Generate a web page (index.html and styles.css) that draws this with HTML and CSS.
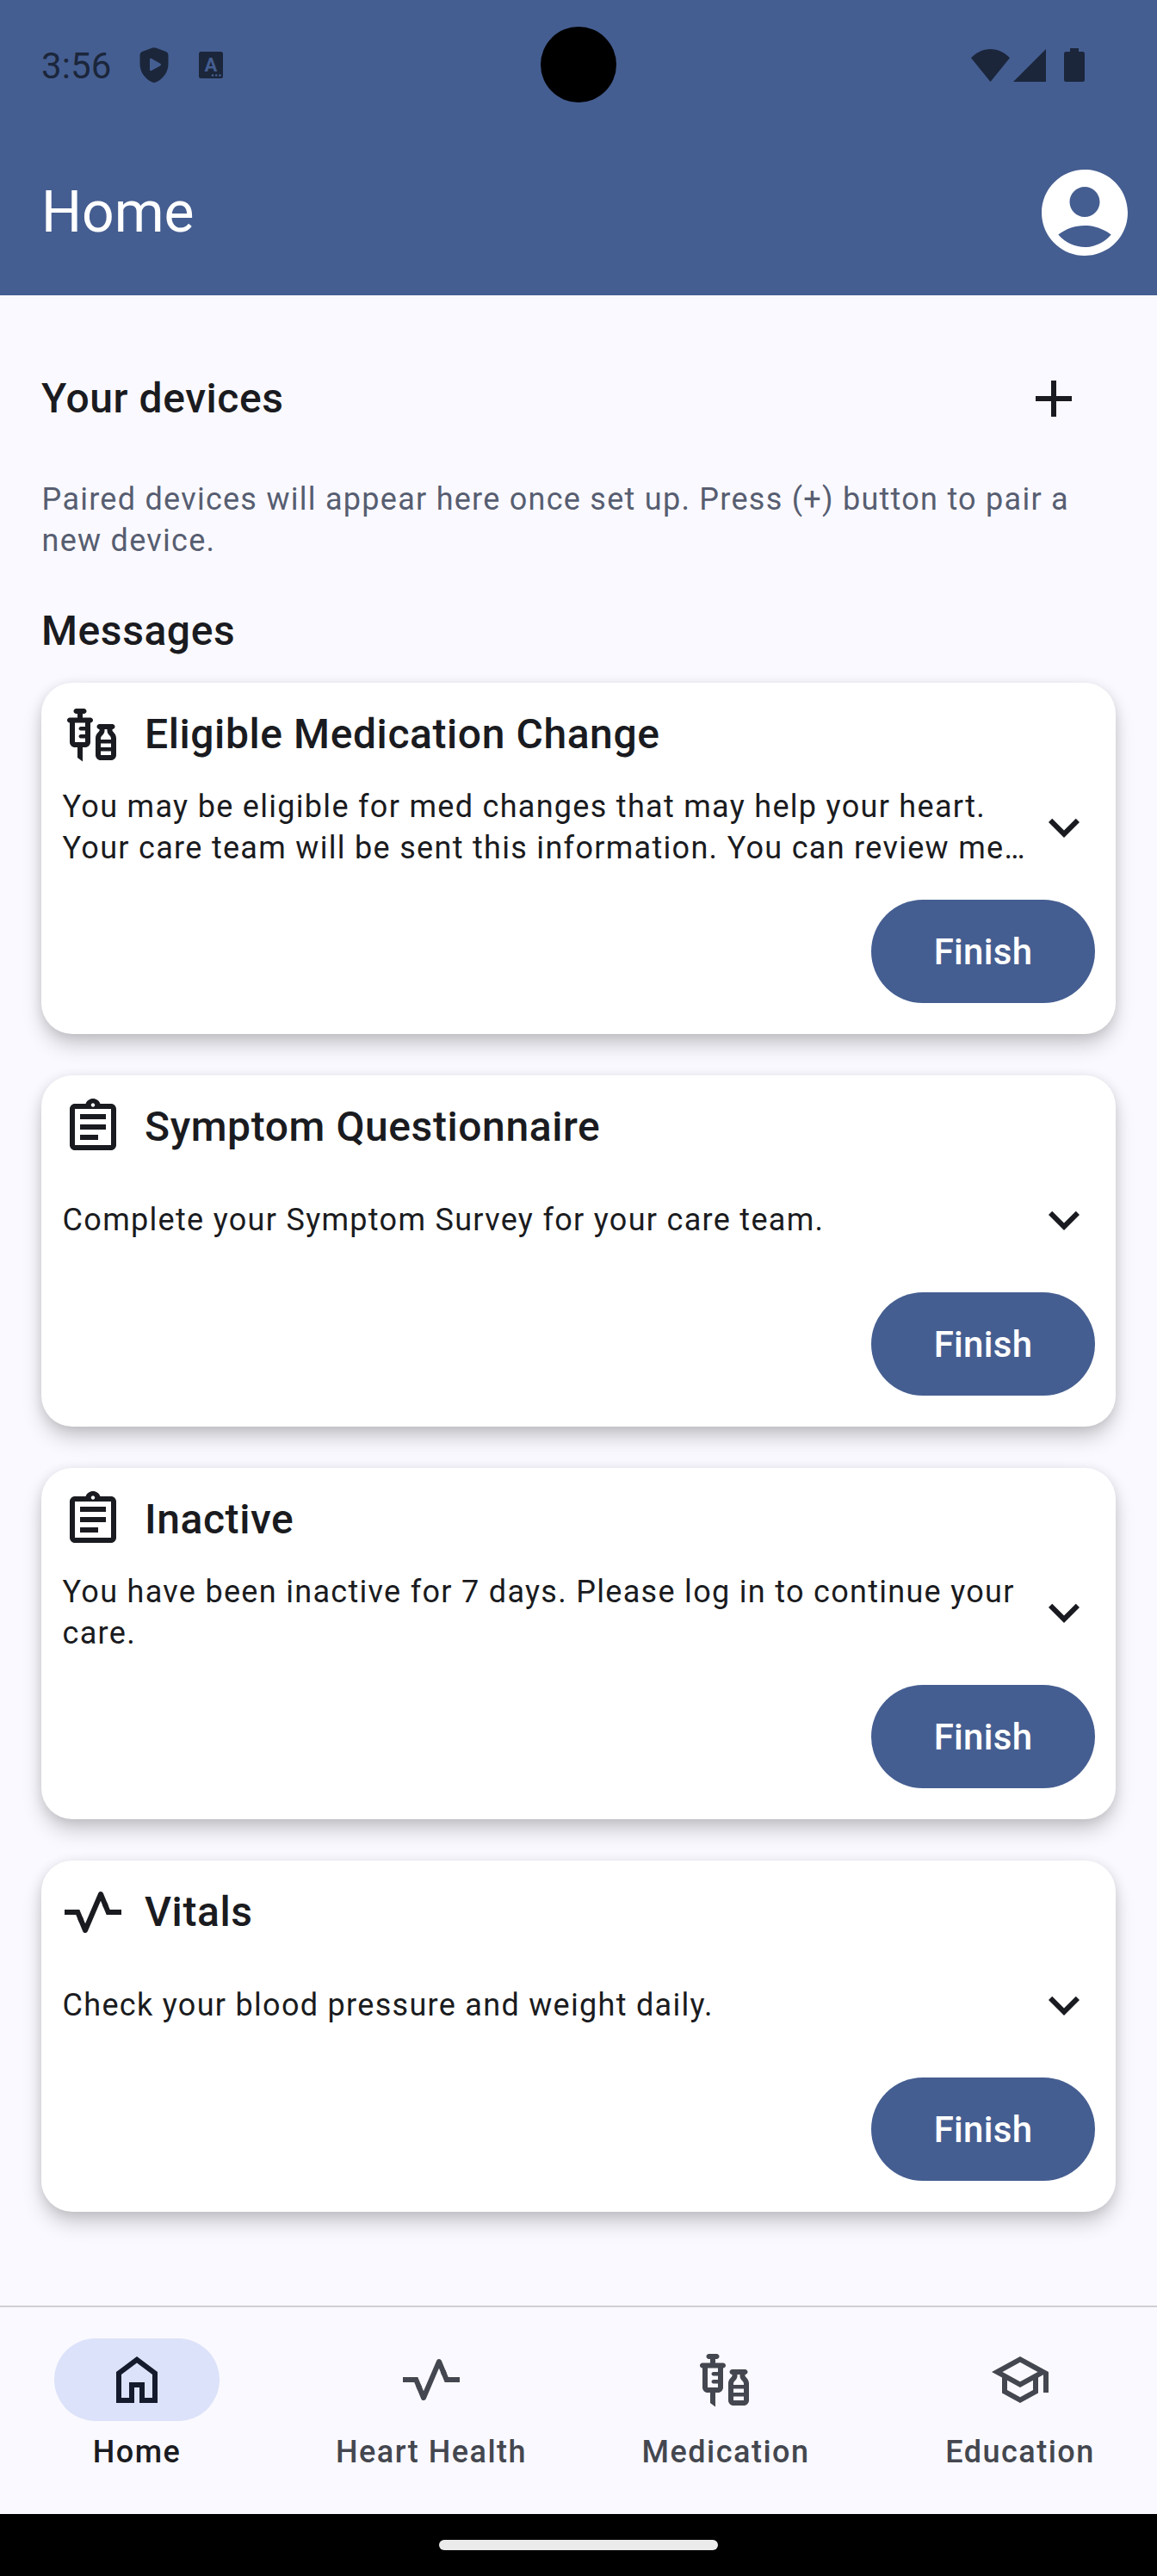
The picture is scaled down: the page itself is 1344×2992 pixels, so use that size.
FILE: index.html
```html
<!DOCTYPE html>
<html lang="en">
<head>
<meta charset="utf-8">
<title>Home</title>
<link rel="stylesheet" href="styles.css">
</head>
<body>
<svg class="defs" aria-hidden="true">
  <symbol id="vaccines" viewBox="0 0 24 24"><path d="M11,5.5H8V4h0.5c0.55,0,1-0.45,1-1c0-0.55-0.45-1-1-1h-3c-0.55,0-1,0.45-1,1c0,0.55,0.45,1,1,1H6v1.5H3c-0.55,0-1,0.45-1,1c0,0.55,0.45,1,1,1V15c0,1.1,0.9,2,2,2h1v4l2,1.5V17h1c1.1,0,2-0.9,2-2V7.5c0.55,0,1-0.45,1-1C12,5.95,11.55,5.5,11,5.5z M9,9H7.25C6.84,9,6.5,9.34,6.5,9.75c0,0.41,0.34,0.75,0.75,0.75H9V12H7.25c-0.41,0-0.75,0.34-0.75,0.75c0,0.41,0.34,0.75,0.75,0.75H9L9,15H5V7.5h4V9z M19.5,10.5V10c0.55,0,1-0.45,1-1c0-0.55-0.45-1-1-1h-5c-0.55,0-1,0.45-1,1c0,0.55,0.45,1,1,1v0.5c0,0.5-1.5,1.16-1.5,3V20c0,1.1,0.9,2,2,2h4c1.1,0,2-0.9,2-2v-6.5C21,11.66,19.5,11,19.5,10.5z M16.5,10.5V10h1v0.5c0,1.6,1.5,2,1.5,3V14h-4c0-0.21,0-0.39,0-0.5C15,12.5,16.5,12.1,16.5,10.5z M15,15.5h4V17h-4V15.5z M15,20v-1.5h4V20H15z"/></symbol>
  <symbol id="assignment" viewBox="0 0 24 24"><path d="M7 15h7v2H7zm0-4h10v2H7zm0-4h10v2H7z"/><path d="M19 3h-4.180C14.400 1.840 13.300 1 12 1s-2.400.840-2.820 2H5c-1.100 0-2 .900-2 2v14c0 1.100.900 2 2 2h14c1.100 0 2-.900 2-2V5c0-1.100-.900-2-2-2zm-7-.250c.410 0 .750.340.750.750s-.340.750-.750.750-.750-.340-.750-.750.340-.750.750-.750zM19 19H5V5h14v14z"/></symbol>
  <symbol id="vitals" viewBox="0 0 24 24"><g fill="none" stroke="currentColor" stroke-width="2"><path d="M1 12H6.100L7.500 15.400M16.500 8.600L17.900 12H23"/><path stroke-linejoin="round" d="M7 14.186L9 19L15 5L17 9.814"/></g></symbol>
  <symbol id="chevron" viewBox="0 0 24 24"><path d="M16.590 8.590L12 13.170 7.410 8.590 6 10l6 6 6-6z"/></symbol>
  <symbol id="home" viewBox="0 0 24 24"><path d="M6 19h3v-6h6v6h3v-9l-6-4.500L6 10v9zm-2 2V9l8-6 8 6v12h-7v-6h-2v6H4z"/></symbol>
  <symbol id="school" viewBox="0 0 24 24"><path d="M12 3L1 9l4 2.180v6L12 21l7-3.820v-6l2-1.090V17h2V9L12 3zm6.820 6L12 12.720 5.180 9 12 5.280 18.820 9zM17 15.990l-5 2.730-5-2.730v-3.720L12 15l5-2.730v3.720z"/></symbol>
</svg>

<header class="top">
  <div class="status">
    <span class="clock">3:56</span>
    <svg class="shield" viewBox="0 0 34 41"><path fill-rule="evenodd" d="M14.500.700Q17-.400 19.500.700L31 5Q33.500 6 33.500 9V19C33.500 29 27.500 36.500 19 40.600Q17 41.400 15 40.600C6.500 36.500.500 29 .500 19V9Q.500 6 3 5zM12 14V26Q12 28 14 27L24 21.500Q26 20 24 18.800L14 13Q12 12 12 14z"/></svg>
    <svg class="keyboard" viewBox="0 0 28 31"><rect width="28" height="31" rx="2.500"/><text class="cut-letter" x="14" y="22.500" text-anchor="middle">A</text><g class="cut-dots"><circle cx="16" cy="27.500" r="1.300"/><circle cx="20.200" cy="27.500" r="1.300"/><circle cx="24.500" cy="27.500" r="1.300"/></g></svg>
    <span class="camera"></span>
    <svg class="wifi" viewBox="0 0 45 38"><path d="M22.500 38L0 10.200C6 4 14 0 22.500 0S39 4 45 10.200z"/></svg>
    <svg class="signal" viewBox="0 0 38 38"><path d="M38 0V38H0z"/></svg>
    <svg class="battery" viewBox="0 0 24 39"><path d="M7 0H17V4H21.500Q24 4 24 6.500V36.500Q24 39 21.500 39H2.500Q0 39 0 36.500V6.500Q0 4 2.500 4H7z"/></svg>
  </div>
  <div class="appbar">
    <h1 class="page-title">Home</h1>
    <svg class="account" viewBox="0 0 24 24"><path d="M12 2C6.480 2 2 6.480 2 12s4.480 10 10 10 10-4.480 10-10S17.520 2 12 2zm0 4c1.930 0 3.500 1.570 3.500 3.500S13.930 13 12 13s-3.500-1.570-3.500-3.500S10.070 6 12 6zm0 14c-2.030 0-4.430-.820-6.140-2.880C7.550 15.800 9.680 15 12 15s4.450.800 6.140 2.120C16.430 19.180 14.030 20 12 20z"/></svg>
  </div>
</header>

<main class="content">
  <div class="devices">
    <h2 class="heading">Your devices</h2>
    <button class="add" aria-label="Add device"><svg class="icon" viewBox="0 0 24 24"><path d="M19 13h-6v6h-2v-6H5v-2h6V5h2v6h6v2z"/></svg></button>
  </div>
  <p class="hint">Paired devices will appear here once set up. Press (+) button to pair a new device.</p>
  <h2 class="heading messages-heading">Messages</h2>
  <div class="cards">
    <article class="card">
      <div class="card-head"><svg class="icon"><use href="#vaccines"/></svg><h3 class="heading">Eligible Medication Change</h3></div>
      <div class="card-body"><p class="card-text">You may be eligible for med changes that may help your heart.<br>Your care team will be sent this information. You can review me…</p><svg class="icon"><use href="#chevron"/></svg></div>
      <div class="card-foot"><button class="finish">Finish</button></div>
    </article>
    <article class="card">
      <div class="card-head"><svg class="icon"><use href="#assignment"/></svg><h3 class="heading">Symptom Questionnaire</h3></div>
      <div class="card-body"><p class="card-text">Complete your Symptom Survey for your care team.</p><svg class="icon"><use href="#chevron"/></svg></div>
      <div class="card-foot"><button class="finish">Finish</button></div>
    </article>
    <article class="card">
      <div class="card-head"><svg class="icon"><use href="#assignment"/></svg><h3 class="heading">Inactive</h3></div>
      <div class="card-body"><p class="card-text">You have been inactive for 7 days. Please log in to continue your care.</p><svg class="icon"><use href="#chevron"/></svg></div>
      <div class="card-foot"><button class="finish">Finish</button></div>
    </article>
    <article class="card">
      <div class="card-head"><svg class="icon"><use href="#vitals"/></svg><h3 class="heading">Vitals</h3></div>
      <div class="card-body"><p class="card-text">Check your blood pressure and weight daily.</p><svg class="icon"><use href="#chevron"/></svg></div>
      <div class="card-foot"><button class="finish">Finish</button></div>
    </article>
  </div>
</main>

<nav class="tabs">
  <a class="tab active"><span class="pill"><svg class="icon"><use href="#home"/></svg></span><span>Home</span></a>
  <a class="tab"><span class="pill"><svg class="icon"><use href="#vitals"/></svg></span><span>Heart Health</span></a>
  <a class="tab"><span class="pill"><svg class="icon"><use href="#vaccines"/></svg></span><span>Medication</span></a>
  <a class="tab"><span class="pill"><svg class="icon"><use href="#school"/></svg></span><span>Education</span></a>
</nav>
<footer class="gesture"><span class="handle"></span></footer>
</body>
</html>
```
FILE: styles.css
```css
* { box-sizing: border-box; margin: 0; padding: 0; }
body {
  width: 1344px;
  height: 2992px;
  display: flex;
  flex-direction: column;
  background: #faf9ff;
  color: #1a1b20;
  font-family: Roboto, sans-serif;
  overflow: hidden;
}
svg { display: block; flex: none; fill: currentColor; }
button { border: 0; background: none; color: inherit; font: inherit; }
.defs { position: absolute; width: 0; height: 0; }
.icon { width: 72px; height: 72px; }

.top { height: 343px; background: #455e91; color: #fff; }
.status {
  position: relative;
  display: flex;
  align-items: center;
  height: 151px;
  padding: 0 84px 0 48px;
  color: #1b263b;
}
.clock { width: 114px; font-size: 42px; line-height: 50px; letter-spacing: 0.100px; margin-top: 3px; }
.shield { width: 34px; height: 41px; }
.keyboard { width: 28px; height: 31px; margin-left: 35px; }
.cut-letter { fill: #455e91; font-size: 22px; font-weight: 700; }
.cut-dots { fill: #455e91; }
.camera {
  position: absolute;
  left: 628px;
  top: 31px;
  width: 88px;
  height: 88px;
  border-radius: 50%;
  background: #000;
}
.wifi { width: 45px; height: 38px; margin-left: auto; }
.signal { width: 38px; height: 38px; margin-left: 4px; }
.battery { width: 24px; height: 39px; margin-left: 21px; }
.appbar { display: flex; justify-content: space-between; align-items: center; height: 192px; padding: 0 24px 0 48px; }
.page-title { font-size: 66px; line-height: 84px; font-weight: 400; }
.account { width: 120px; height: 120px; }

.content { flex: 1; padding: 48px 48px 0; }
.devices { display: flex; align-items: center; justify-content: space-between; height: 144px; }
.heading { font-size: 48px; line-height: 72px; font-weight: 500; letter-spacing: 0.580px; }
.add { display: flex; align-items: center; justify-content: center; width: 144px; height: 144px; }
.hint { margin-top: 21px; padding-left: 0.600px; font-size: 36px; line-height: 48px; letter-spacing: 1.265px; color: #575e71; }
.messages-heading { margin-top: 45px; }
.cards { display: flex; flex-direction: column; gap: 48px; margin-top: 24px; }
.card {
  height: 408px;
  padding: 24px;
  border-radius: 36px;
  background: #fff;
  box-shadow: 0 14px 24px -2px rgba(0, 0, 0, 0.200), 0 2px 14px rgba(0, 0, 0, 0.100);
}
.card-head { display: flex; gap: 24px; height: 72px; }
.card-body { display: flex; align-items: center; height: 144px; }
.card-text { flex: 1; padding-left: 0.600px; font-size: 36px; line-height: 48px; letter-spacing: 1.300px; }
.card-foot { display: flex; justify-content: flex-end; align-items: center; height: 144px; }
.finish {
  width: 260px;
  height: 120px;
  border-radius: 60px;
  background: #455e91;
  color: #fff;
  font-size: 42px;
  font-weight: 500;
  letter-spacing: 0.300px;
}

.tabs {
  display: flex;
  gap: 24px;
  height: 242px;
  padding-top: 37px;
  border-top: 1px solid #c2c2c6;
  box-shadow: inset 0 1px #dddde0;
}
.tab {
  flex: 1;
  display: flex;
  flex-direction: column;
  align-items: center;
  gap: 12px;
  font-size: 36px;
  line-height: 48px;
  font-weight: 500;
  letter-spacing: 1.500px;
  color: #44474f;
}
.pill { display: flex; align-items: center; justify-content: center; width: 192px; height: 96px; border-radius: 48px; }
.active { color: #1a1b20; }
.active .pill { background: #dce2f9; color: #151b2c; }
.gesture { display: flex; align-items: center; justify-content: center; height: 72px; background: #000; }
.handle { width: 324px; height: 12px; border-radius: 6px; background: #ebebeb; }
```
